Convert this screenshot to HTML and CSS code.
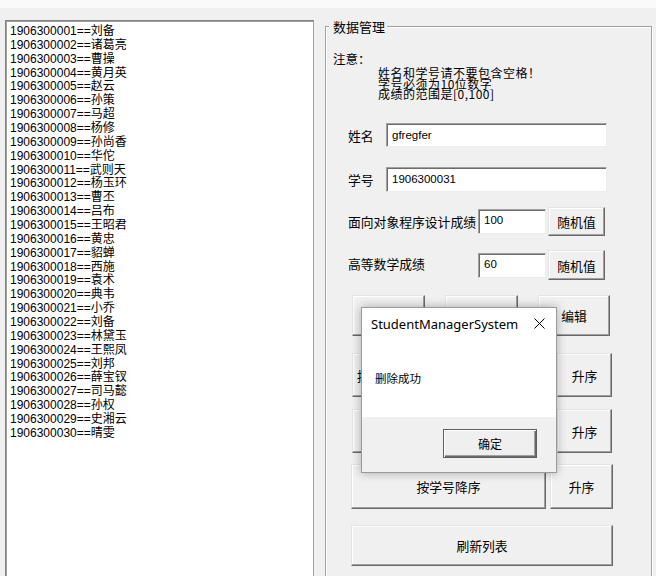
FILE: index.html
```html
<!DOCTYPE html>
<html lang="zh-CN">
<head>
<meta charset="utf-8">
<title>StudentManagerSystem</title>
<link rel="stylesheet" href="styles.css">
</head>
<body>
<div class="topstrip"></div>
<div class="window">
  <div class="listbox">
    <div class="item">1906300001==刘备</div>
    <div class="item">1906300002==诸葛亮</div>
    <div class="item">1906300003==曹操</div>
    <div class="item">1906300004==黄月英</div>
    <div class="item">1906300005==赵云</div>
    <div class="item">1906300006==孙策</div>
    <div class="item">1906300007==马超</div>
    <div class="item">1906300008==杨修</div>
    <div class="item">1906300009==孙尚香</div>
    <div class="item">1906300010==华佗</div>
    <div class="item">1906300011==武则天</div>
    <div class="item">1906300012==杨玉环</div>
    <div class="item">1906300013==曹丕</div>
    <div class="item">1906300014==吕布</div>
    <div class="item">1906300015==王昭君</div>
    <div class="item">1906300016==黄忠</div>
    <div class="item">1906300017==貂蝉</div>
    <div class="item">1906300018==西施</div>
    <div class="item">1906300019==袁术</div>
    <div class="item">1906300020==典韦</div>
    <div class="item">1906300021==小乔</div>
    <div class="item">1906300022==刘备</div>
    <div class="item">1906300023==林黛玉</div>
    <div class="item">1906300024==王熙凤</div>
    <div class="item">1906300025==刘邦</div>
    <div class="item">1906300026==薛宝钗</div>
    <div class="item">1906300027==司马懿</div>
    <div class="item">1906300028==孙权</div>
    <div class="item">1906300029==史湘云</div>
    <div class="item">1906300030==晴雯</div>
  </div>

  <fieldset class="group">
    <legend>数据管理</legend>
    <div class="notice-title">注意：</div>
    <div class="notice-lines">
      <div>姓名和学号请不要包含空格！</div>
      <div>学号必须为10位数字</div>
      <div>成绩的范围是[0,100]</div>
    </div>

    <div class="field-row row-name">
      <span class="lbl lbl-short">姓名</span>
      <div class="tb tb-wide">gfregfer</div>
    </div>
    <div class="field-row row-id">
      <span class="lbl lbl-short">学号</span>
      <div class="tb tb-wide">1906300031</div>
    </div>
    <div class="field-row row-oop">
      <span class="lbl lbl-long">面向对象程序设计成绩</span>
      <div class="tb tb-score">100</div>
      <button class="btn btn-rand">随机值</button>
    </div>
    <div class="field-row row-math">
      <span class="lbl lbl-long">高等数学成绩</span>
      <div class="tb tb-score">60</div>
      <button class="btn btn-rand">随机值</button>
    </div>

    <div class="actions">
      <div class="act-row act-top">
        <button class="btn">添加</button>
        <button class="btn">删除</button>
        <button class="btn">编辑</button>
      </div>
      <div class="act-row act-sort">
        <button class="btn">按面向对象程序设计成绩降序排列</button>
        <button class="btn">升序</button>
      </div>
      <div class="act-row act-sort act-sort2">
        <button class="btn">按高等数学成绩降序排列</button>
        <button class="btn">升序</button>
      </div>
      <div class="act-row act-id">
        <button class="btn">按学号降序</button>
        <button class="btn">升序</button>
      </div>
      <div class="act-row act-refresh">
        <button class="btn">刷新列表</button>
      </div>
    </div>
  </fieldset>
</div>

<div class="dialog" role="dialog">
  <div class="dlg-title">
    <span class="dlg-caption">StudentManagerSystem</span>
    <svg class="dlg-close" width="11" height="11" viewBox="0 0 11 11"><path d="M0.5 0.5L10.5 10.5M10.5 0.5L0.5 10.5" stroke="#000" stroke-width="1" fill="none"/></svg>
  </div>
  <div class="dlg-body">删除成功</div>
  <div class="dlg-footer">
    <button class="dlg-ok">确定</button>
  </div>
</div>
</body>
</html>
```

FILE: styles.css
```css
* { box-sizing: border-box; }
html, body { margin: 0; padding: 0; }
body {
  width: 656px;
  height: 576px;
  overflow: hidden;
  position: relative;
  background: #f0f0f0;
  color: #000;
  font-family: "Liberation Sans", "Noto Sans CJK SC", sans-serif;
}
.topstrip { height: 8px; background: #fafafa; }
.window { display: flex; align-items: flex-start; }

.listbox {
  margin: 12px 0 0 5px;
  width: 309px;
  height: 570px;
  flex: none;
  background: #fff;
  border: 1px solid #a0a0a0;
  border-top-color: #828282;
  border-left-color: #828282;
  box-shadow: inset 1px 1px 0 #a0a0a0;
  padding: 4px 0 0 4px;
  font-size: 12px;
  line-height: 13.86px;
  white-space: nowrap;
}

.group {
  margin: 10px 0 0 11px;
  width: 327px;
  height: 570px;
  flex: none;
  min-width: 0;
  padding: 0;
  border: 1px solid #a0a0a0;
  box-shadow: inset 1px 1px 0 #fff, 1px 1px 0 #fff;
  font-family: "Noto Sans CJK SC", sans-serif;
}
.group legend {
  margin-left: 3px;
  padding: 0 2px 0 4px;
  font-size: 13px;
  line-height: 17px;
  background: #f0f0f0;
}

.notice-title { margin: 17px 0 0 7px; font-size: 12.5px; line-height: 14px; }
.notice-lines {
  margin: 2px 0 0 52px;
  font-size: 12px;
  letter-spacing: 0.5px;
  line-height: 10.6px;
  white-space: nowrap;
}

.field-row { display: flex; align-items: center; margin-left: 22px; }
.row-name { margin-top: 23.3px; height: 24px; }
.row-id { margin-top: 20px; height: 25px; }
.row-oop { margin-top: 15px; height: 29px; }
.row-math { margin-top: 14px; height: 30px; }

.lbl { font-size: 12.8px; white-space: nowrap; flex: none; }
.lbl-short { width: 38px; }
.lbl-long { width: 130px; }
.row-math .lbl { position: relative; top: -2px; }

.tb {
  height: 24px;
  flex: none;
  display: flex;
  align-items: center;
  padding: 0 0 1px 5px;
  background: #fff;
  border: 1px solid;
  border-color: #a0a0a0 #ececec #ececec #a0a0a0;
  box-shadow: inset 1px 1px 0 #6d6d6d;
  font-family: "Liberation Sans", sans-serif;
  font-size: 11.5px;
}
.row-id .tb { height: 25px; }
.tb-wide { width: 221px; }
.tb-score { width: 68px; height: 25px; padding-bottom: 3px; }

.btn {
  margin: 0;
  padding: 0;
  background: #f0f0f0;
  border: 1px solid;
  border-color: #e3e3e3 #696969 #696969 #e3e3e3;
  box-shadow: inset -1px -1px 0 #a0a0a0, inset 1px 1px 0 #fff;
  font-family: "Noto Sans CJK SC", sans-serif;
  font-size: 12.8px;
  color: #000;
  white-space: nowrap;
  overflow: hidden;
  display: flex;
  align-items: center;
  justify-content: center;
}
.btn-rand { width: 57px; height: 29px; margin-left: 2px; flex: none; }
.row-math .btn-rand { height: 30px; }

.actions { margin-left: 25px; }
.act-row { display: grid; }
.act-top { margin-top: 15px; height: 41px; padding-left: 1px; grid-template-columns: 73px 73px 72px; column-gap: 20px; }
.act-sort { margin-top: 17px; height: 44px; padding-left: 1px; grid-template-columns: 202px 55px; column-gap: 3px; }
.act-sort2 { margin-top: 12px; }
.act-id { margin-top: 11px; height: 45px; grid-template-columns: 195px 63px; column-gap: 4px; }
.act-refresh { margin-top: 16px; height: 41px; grid-template-columns: 262px; }

.dialog {
  position: absolute;
  left: 361px;
  top: 307px;
  width: 196px;
  height: 166px;
  background: #fff;
  border: 1px solid #9a9a9a;
  box-shadow: 0 0 9px rgba(0, 0, 0, 0.3);
  display: flex;
  flex-direction: column;
}
.dlg-title {
  height: 31px;
  flex: none;
  display: flex;
  align-items: center;
  padding-left: 9px;
}
.dlg-caption {
  font-family: "Noto Sans", "Liberation Sans", sans-serif;
  font-size: 13px;
  color: #000;
}
.dlg-close { margin-left: auto; margin-right: 11px; display: block; }
.dlg-body {
  height: 78px;
  flex: none;
  display: flex;
  align-items: center;
  padding-left: 13px;
  font-family: "Noto Sans CJK SC", sans-serif;
  font-size: 11.5px;
}
.dlg-footer {
  flex: 1;
  background: #f0f0f0;
  display: flex;
  justify-content: flex-end;
  align-items: flex-start;
  padding: 12px 19px 0 0;
}
.dlg-ok {
  width: 94px;
  height: 29px;
  margin: 0;
  padding: 0;
  background: #efefef;
  border: 1px solid #5e5e5e;
  box-shadow: inset 1px 1px 0 #fff, inset -1px -1px 0 #696969, inset -2px -2px 0 #a0a0a0;
  font-family: "Noto Sans CJK SC", sans-serif;
  font-size: 12px;
  color: #000;
}
```
